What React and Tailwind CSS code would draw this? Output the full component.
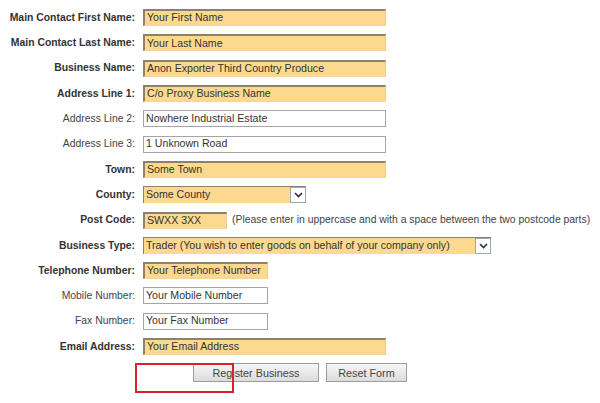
import React from 'react';

const font = { fontFamily: '"Liberation Sans", Arial, sans-serif' };

function Label({ text, bold }) {
  return (
    <div
      className={`w-[136px] shrink-0 text-right pr-[1px] text-[10.4px] whitespace-nowrap ${
        bold ? 'font-bold text-[#333]' : 'text-[#444]'
      }`}
    >
      {text}
    </div>
  );
}

function Field({ value, width, req }) {
  return (
    <div
      className={`h-[17px] flex items-center pl-[2px] text-[10.6px] text-[#333] whitespace-nowrap overflow-hidden ${
        req
          ? 'bg-[#fdd98f] border-t-[2px] border-l-[2px] border-t-[#8a8170] border-l-[#8a8170] border-r border-b border-r-[#e8cc90] border-b-[#f3d596]'
          : 'bg-white border border-[#a5a5a5]'
      } ${width}`}
    >
      {value}
    </div>
  );
}

function Select({ value, width }) {
  return (
    <div
      className={`h-[17px] flex items-center bg-[#fdd98f] border-t border-l border-t-[#8a8170] border-l-[#8a8170] text-[10.6px] text-[#333] ${width}`}
    >
      <span className="flex-1 pl-[2px] whitespace-nowrap overflow-hidden">{value}</span>
      <span className="w-[16px] h-[16px] bg-white border border-[#9aa] flex items-center justify-center">
        <svg width="9" height="6" viewBox="0 0 9 6">
          <path d="M1 1 L4.5 4.5 L8 1" fill="none" stroke="#333" strokeWidth="1.6" />
        </svg>
      </span>
    </div>
  );
}

function Row({ label, bold, children }) {
  return (
    <div className="h-[25.3px] flex items-center gap-[7px]">
      <Label text={label} bold={bold} />
      {children}
    </div>
  );
}

export default function App() {
  return (
    <div className="relative w-[600px] h-[403px] bg-white overflow-hidden" style={font}>
      <div className="pt-[5px] flex flex-col">
        <Row label="Main Contact First Name:" bold>
          <Field value="Your First Name" width="w-[243px]" req />
        </Row>
        <Row label="Main Contact Last Name:" bold>
          <Field value="Your Last Name" width="w-[243px]" req />
        </Row>
        <Row label="Business Name:" bold>
          <Field value="Anon Exporter Third Country Produce" width="w-[243px]" req />
        </Row>
        <Row label="Address Line 1:" bold>
          <Field value="C/o Proxy Business Name" width="w-[243px]" req />
        </Row>
        <Row label="Address Line 2:">
          <Field value="Nowhere Industrial Estate" width="w-[243px]" />
        </Row>
        <Row label="Address Line 3:">
          <Field value="1 Unknown Road" width="w-[243px]" />
        </Row>
        <Row label="Town:" bold>
          <Field value="Some Town" width="w-[243px]" req />
        </Row>
        <Row label="County:" bold>
          <Select value="Some County" width="w-[163px]" />
        </Row>
        <Row label="Post Code:" bold>
          <Field value="SWXX 3XX" width="w-[84px]" req />
          <span className="ml-[-2px] text-[10.4px] text-[#444] whitespace-nowrap">
            (Please enter in uppercase and with a space between the two postcode parts)
          </span>
        </Row>
        <Row label="Business Type:" bold>
          <Select value="Trader (You wish to enter goods on behalf of your company only)" width="w-[348px]" />
        </Row>
        <Row label="Telephone Number:" bold>
          <Field value="Your Telephone Number" width="w-[125px]" req />
        </Row>
        <Row label="Mobile Number:">
          <Field value="Your Mobile Number" width="w-[125px]" />
        </Row>
        <Row label="Fax Number:">
          <Field value="Your Fax Number" width="w-[125px]" />
        </Row>
        <Row label="Email Address:" bold>
          <Field value="Your Email Address" width="w-[243px]" req />
        </Row>
        <div className="flex gap-[7px] pl-[193px] mt-[4px]">
          <button className="w-[126px] h-[19px] border border-[#9c9c9c] bg-gradient-to-b from-[#f6f6f6] to-[#dcdcdc] text-[10.8px] text-[#444]">
            Register Business
          </button>
          <button className="w-[81px] h-[19px] border border-[#9c9c9c] bg-gradient-to-b from-[#f6f6f6] to-[#dcdcdc] text-[10.8px] text-[#444]">
            Reset Form
          </button>
        </div>
      </div>
      <div className="absolute left-[135px] top-[363px] w-[99px] h-[30px] border-2 border-[#d8202e]" />
    </div>
  );
}
